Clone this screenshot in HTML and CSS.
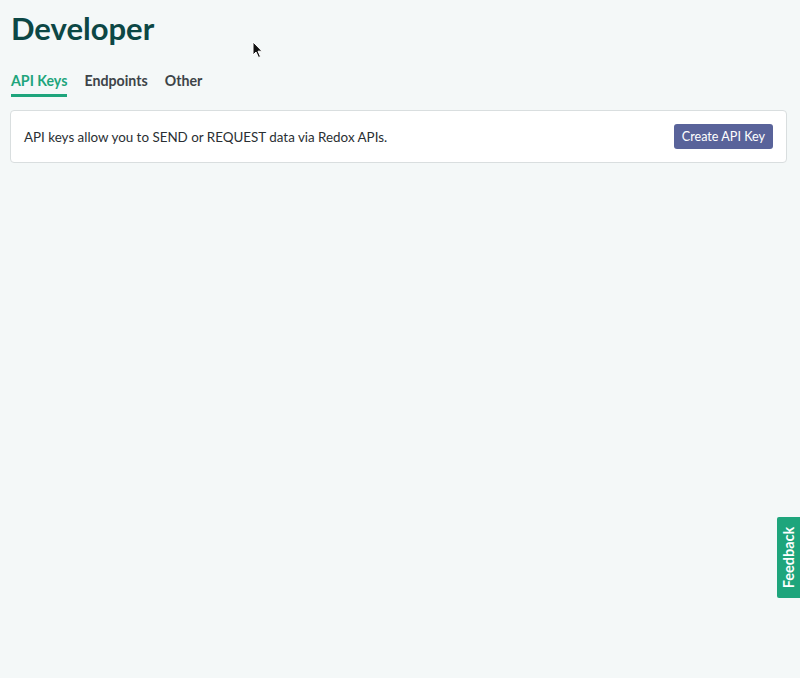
FILE: index.html
```html
<!DOCTYPE html>
<html>
<head>
<meta charset="utf-8">
<link rel="stylesheet" href="styles.css">
</head>
<body>
<main class="page">
  <h1 class="title">Developer</h1>
  <nav class="tabs">
    <a class="tab active">API Keys</a>
    <a class="tab">Endpoints</a>
    <a class="tab">Other</a>
  </nav>
  <section class="card">
    <p class="card-text">API keys allow you to SEND or REQUEST data via Redox APIs.</p>
    <button class="btn">Create API Key</button>
  </section>
</main>
<div class="feedback"><span>Feedback</span></div>
<svg class="cursor" width="12" height="18" viewBox="0 0 12 18"><path d="M1 1 L1 14 L4 11 L6.5 16.5 L8.5 15.6 L6 10.2 L10 10.2 Z" fill="#111" stroke="#fff" stroke-width="1"/></svg>
</body>
</html>
```
FILE: styles.css
```css
html, body {
  margin: 0;
  padding: 0;
  background: #f4f8f8;
  font-family: Lato, "Noto Sans", sans-serif;
}
body {
  height: 678px;
  overflow: hidden;
  position: relative;
}
.page {
  padding: 8px 13px 0 10px;
}
.title {
  margin: 0 0 0 1px;
  font-size: 31px;
  font-weight: 700;
  color: #0c4745;
  line-height: 40px;
}
.tabs {
  display: flex;
  gap: 17px;
  margin: 24px 0 0 1px;
}
.tab {
  font-size: 14.2px;
  font-weight: 700;
  color: #3d4448;
  padding-bottom: 5px;
  border-bottom: 3px solid transparent;
  line-height: 17px;
}
.tab.active {
  color: #1ea57c;
  border-bottom-color: #1ea57c;
}
.card {
  margin-top: 13px;
  background: #fff;
  border: 1px solid #d9dedf;
  border-radius: 4px;
  height: 52px;
  box-sizing: border-box;
  height: 53px;
  display: flex;
  align-items: center;
  justify-content: space-between;
  padding: 0 13px 0 13px;
}
.card-text {
  margin: 0;
  font-size: 13.4px;
  color: #2a2f33;
}
.btn {
  font-family: Lato, "Noto Sans", sans-serif;
  font-size: 12.6px;
  color: #fff;
  background: #59639a;
  border: none;
  border-radius: 3px;
  height: 25px;
  padding: 0 8px;
}
.feedback {
  position: absolute;
  left: 777px;
  top: 517px;
  width: 23px;
  height: 81px;
  background: #1ea57c;
  border-radius: 2px 0 0 2px;
  display: flex;
  align-items: center;
  justify-content: center;
}
.feedback span {
  transform: rotate(-90deg);
  color: #fff;
  font-weight: 700;
  font-size: 14.5px;
  white-space: nowrap;
}
.cursor {
  position: absolute;
  left: 252px;
  top: 41px;
}
```
